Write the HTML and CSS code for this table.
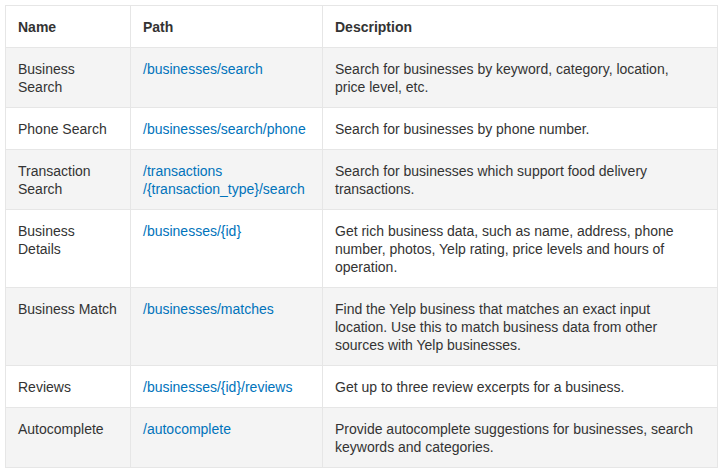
FILE: index.html
```html
<!DOCTYPE html>
<html>
<head>
<meta charset="utf-8">
<link rel="stylesheet" href="styles.css">
</head>
<body>
<table class="api-table">
  <colgroup>
    <col class="c-name">
    <col class="c-path">
    <col class="c-desc">
  </colgroup>
  <thead>
    <tr><th>Name</th><th>Path</th><th class="desc">Description</th></tr>
  </thead>
  <tbody>
    <tr><td>Business Search</td><td><a href="#">/businesses/search</a></td><td class="desc">Search for businesses by keyword, category, location, price level, etc.</td></tr>
    <tr><td>Phone Search</td><td><a href="#">/businesses/search/phone</a></td><td class="desc">Search for businesses by phone number.</td></tr>
    <tr><td>Transaction Search</td><td><a href="#">/transactions<br>/{transaction_type}/search</a></td><td class="desc">Search for businesses which support food delivery transactions.</td></tr>
    <tr><td>Business Details</td><td><a href="#">/businesses/{id}</a></td><td class="desc">Get rich business data, such as name, address, phone number, photos, Yelp rating, price levels and hours of operation.</td></tr>
    <tr><td>Business Match</td><td><a href="#">/businesses/matches</a></td><td class="desc">Find the Yelp business that matches an exact input location. Use this to match business data from other sources with Yelp businesses.</td></tr>
    <tr><td>Reviews</td><td><a href="#">/businesses/{id}/reviews</a></td><td class="desc">Get up to three review excerpts for a business.</td></tr>
    <tr><td>Autocomplete</td><td><a href="#">/autocomplete</a></td><td class="desc">Provide autocomplete suggestions for businesses, search keywords and categories.</td></tr>
  </tbody>
</table>
</body>
</html>
```
FILE: styles.css
```css
html, body {
  margin: 0;
  padding: 0;
  background: #fff;
}
body {
  padding: 5px;
  font-family: "Liberation Sans", Arial, sans-serif;
  font-size: 14px;
  line-height: 18px;
  color: #333;
}
.api-table {
  width: 712px;
  border-collapse: collapse;
  table-layout: fixed;
}
.c-name { width: 125px; }
.c-path { width: 192px; }
.c-desc { width: 395px; }
.api-table th,
.api-table td {
  border: 1px solid #e6e6e6;
  padding: 12px 12px 11px;
  text-align: left;
  vertical-align: top;
}
.api-table .desc {
  padding-right: 18px;
}
.api-table th {
  font-weight: bold;
}
.api-table tbody tr:nth-child(odd) {
  background: #f4f4f4;
}
.api-table a {
  color: #0073bb;
  text-decoration: none;
}
```
